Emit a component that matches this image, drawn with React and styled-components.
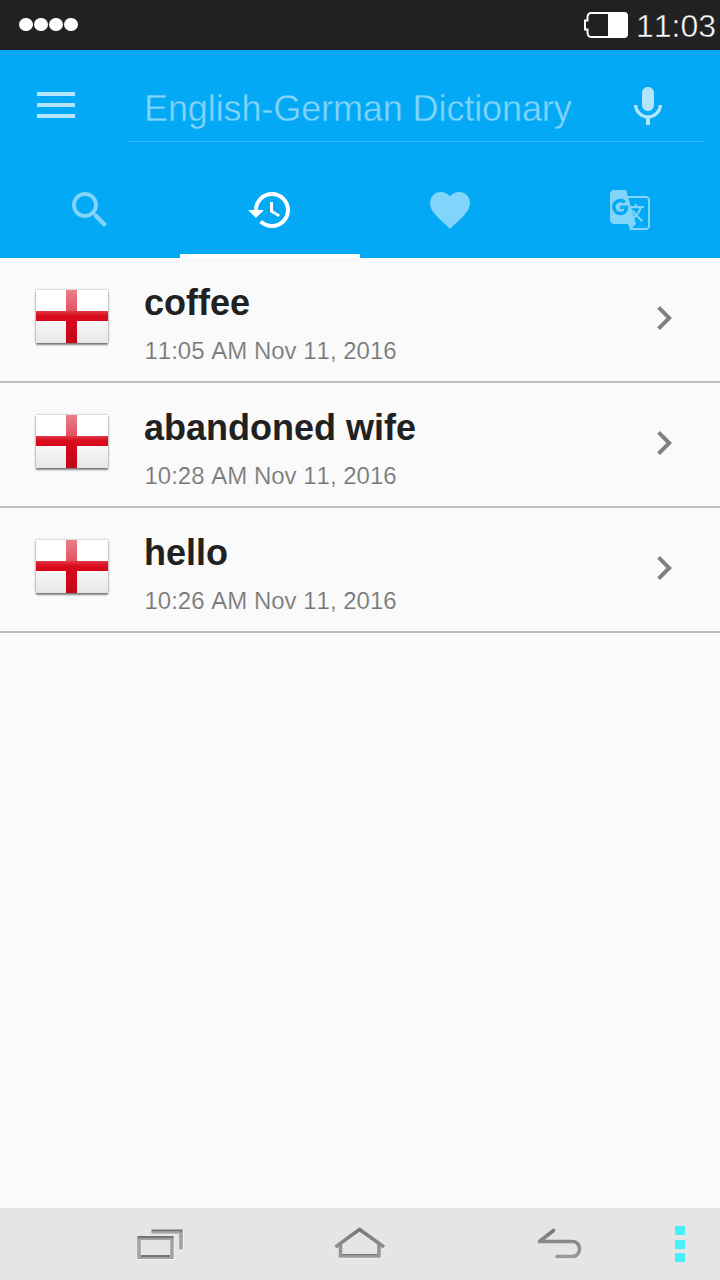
import React, { useState } from 'react';
import styled, { createGlobalStyle } from 'styled-components';

const GlobalStyle = createGlobalStyle`
  * {
    box-sizing: border-box;
  }

  body {
    margin: 0;
    background: #fafafa;
    font-family: 'Liberation Sans', Arial, sans-serif;
    font-kerning: none;
  }
`;

const Screen = styled.div`
  display: flex;
  flex-direction: column;
  width: 720px;
  height: 1280px;
  background: #fafafa;
  overflow: hidden;
`;

// --- status bar ---
const StatusBar = styled.div`
  display: flex;
  align-items: center;
  justify-content: space-between;
  height: 50px;
  padding: 0 4px 0 19px;
  background: #212121;
`;

const Dots = styled.div`
  display: flex;
  gap: 1.5px;
  padding-bottom: 1px;
`;

const Dot = styled.span`
  width: 13.5px;
  height: 13.5px;
  border-radius: 50%;
  background: #fff;
`;

const StatusRight = styled.div`
  display: flex;
  align-items: center;
  gap: 7px;
`;

const Clock = styled.span`
  color: #fff;
  font-size: 32px;
  line-height: 50px;
  padding-top: 1px;
  -webkit-text-stroke: 0.5px #212121;
`;

// --- header ---
const Header = styled.header`
  height: 208px;
  background: #03a9f4;
`;

const Toolbar = styled.div`
  display: flex;
  height: 112px;
  padding: 0 16px 0 32px;
`;

const MenuButton = styled.button`
  display: flex;
  align-items: center;
  width: 96px;
  height: 110px;
  padding: 0 0 0 5px;
  border: none;
  background: none;
`;

const SearchField = styled.div`
  display: flex;
  flex: 1;
  justify-content: space-between;
  height: 92px;
  padding: 33px 32px 0 16px;
  border-bottom: 1px solid #35bbf7;
`;

const SearchInput = styled.input`
  width: 450px;
  height: 52px;
  padding: 0;
  border: none;
  outline: none;
  background: none;
  font-family: inherit;
  font-size: 36px;
  letter-spacing: -0.1px;

  &::placeholder {
    color: #81d4fa;
    opacity: 1;
    -webkit-text-stroke: 0.4px #03a9f4;
  }
`;

const Tabs = styled.nav`
  display: grid;
  grid-template-columns: repeat(4, 1fr);
  height: 96px;
`;

const Tab = styled.button`
  display: flex;
  align-items: center;
  justify-content: center;
  padding: 4px 0 0;
  border: none;
  border-bottom: 4px solid ${({ $active }) => ($active ? '#fff' : 'transparent')};
  background: none;
  color: ${({ $active }) => ($active ? '#fff' : '#81d4fa')};
`;

// --- history list ---
const List = styled.main`
  flex: 1;
`;

const Row = styled.div`
  display: flex;
  height: 125px;
  padding: 0 32px 0 36px;
  border-bottom: 2px solid #bdbdbd;
`;

const RowText = styled.div`
  flex: 1;
  padding: 24px 0 0 36px;
`;

const Word = styled.div`
  height: 42px;
  color: #212121;
  font-size: 36px;
  font-weight: bold;
  line-height: 42px;
`;

const Time = styled.div`
  margin: 12px 0 0 0.5px;
  color: #757575;
  font-size: 24px;
  line-height: 30px;
  -webkit-text-stroke: 0.2px #fafafa;
`;

const Flag = styled.div`
  display: grid;
  grid-template-columns: 30px 11px 31px;
  grid-template-rows: 21px 10px 22px;
  width: 72px;
  height: 53px;
  margin-top: 32px;
  border-radius: 1px;
  background: linear-gradient(#fff 40%, #f8f8f8 60%, #e6e6e6);
  box-shadow: 0 0 2px rgba(0, 0, 0, 0.45), 0 2px 2px rgba(0, 0, 0, 0.45);
`;

const CrossV = styled.span`
  grid-column: 2;
  grid-row: 1 / 4;
  background: linear-gradient(#ea7f8b, #e2525f 40%, #d80a1c 50%, #c40618);
`;

const CrossH = styled.span`
  grid-column: 1 / 4;
  grid-row: 2;
  background: linear-gradient(#e03a47, #d90a1b 50%, #d60819);
`;

const Chevron = styled.svg`
  margin-top: 36px;
`;

// --- bottom navigation ---
const NavBar = styled.footer`
  display: grid;
  grid-template-columns: 60px 200px 200px 200px 40px 20px;
  align-items: center;
  justify-items: center;
  height: 72px;
  background: #e5e5e5;
`;

const NavButton = styled.button`
  display: flex;
  grid-column: ${({ $column }) => $column};
  padding: 0 0 2px;
  border: none;
  background: none;
`;

const More = styled.div`
  display: flex;
  flex-direction: column;
  grid-column: 5;
  gap: 4.5px;
`;

const MoreDot = styled.span`
  width: 10px;
  height: 9px;
  background: #48eff8;
`;

const icons = {
  search:
    'M15.5 14h-.79l-.28-.27C15.41 12.59 16 11.11 16 9.5 16 5.91 13.09 3 9.5 3S3 5.91 3 9.5 5.91 16 9.5 16c1.61 0 3.09-.59 4.23-1.57l.27.28v.79l5 4.99L20.49 19l-4.99-5zm-6 0C7.01 14 5 11.99 5 9.5S7.01 5 9.5 5 14 7.01 14 9.5 11.99 14 9.5 14z',
  history:
    'M13 3c-4.97 0-9 4.03-9 9H1l3.89 3.89.07.14L9 12H6c0-3.87 3.13-7 7-7s7 3.13 7 7-3.13 7-7 7c-1.93 0-3.68-.79-4.94-2.06l-1.42 1.42C8.27 19.99 10.51 21 13 21c4.97 0 9-4.03 9-9s-4.03-9-9-9zm-1 5v5l4.28 2.54.72-1.21-3.5-2.08V8H12z',
  favorite:
    'M12 21.35l-1.45-1.32C5.4 15.36 2 12.28 2 8.5 2 5.42 4.42 3 7.5 3c1.74 0 3.41.81 4.5 2.09C13.09 3.81 14.76 3 16.5 3 19.58 3 22 5.42 22 8.5c0 3.78-3.4 6.86-8.55 11.54L12 21.35z',
  translate:
    'M20 5h-9.12L10 2H4c-1.1 0-2 .9-2 2v13c0 1.1.9 2 2 2h7l1 3h8c1.1 0 2-.9 2-2V7c0-1.1-.9-2-2-2zM7.17 14.59c-2.25 0-4.09-1.83-4.09-4.09s1.83-4.09 4.09-4.09c1.04 0 1.99.37 2.74 1.07l.07.06-1.23 1.18-.06-.05c-.29-.27-.78-.59-1.52-.59-1.31 0-2.38 1.09-2.38 2.42s1.07 2.42 2.38 2.42c1.37 0 1.96-.87 2.12-1.46H7.08V9.91h3.95l.01.07c.04.21.05.4.05.61 0 2.35-1.61 4-3.92 4zm6.03-1.71c.33.6.74 1.18 1.19 1.7l-.54.53-.65-2.23zm.77-.76h-.99l-.31-1.04h3.99s-.34 1.31-1.56 2.74c-.52-.62-.89-1.23-1.13-1.7zM21 20c0 .55-.45 1-1 1h-7l2-2-.81-2.77.92-.92L17.79 18l.73-.73-2.71-2.68c.9-1.03 1.6-2.25 1.92-3.51H19v-1.04h-3.64V9h-1.04v1.04h-1.96L11.18 6H20c.55 0 1 .45 1 1v13z',
  mic:
    'M12 14c1.66 0 2.99-1.34 2.99-3L15 5c0-1.66-1.34-3-3-3S9 3.34 9 5v6c0 1.66 1.34 3 3 3zm5.3-3c0 3-2.54 5.1-5.3 5.1S6.7 14 6.7 11H5c0 3.41 2.72 6.23 6 6.72V21h2v-3.28c3.28-.48 6-3.3 6-6.72h-1.7z',
};

const Icon = ({ name }) => (
  <svg width="48" height="48" viewBox="0 0 24 24" fill="currentColor">
    <path d={icons[name]} />
  </svg>
);

const MicButton = styled.button`
  display: flex;
  width: 48px;
  height: 48px;
  padding: 0;
  border: none;
  background: none;
  color: #b3e5fc;
`;

const Battery = () => (
  <svg width="46" height="28" viewBox="0 0 46 28">
    <path
      d="M8 2H40Q44 2 44 6V22Q44 26 40 26H8Q5 26 4.500 22V18.500H2V9.500H4.500V6Q5 2 8 2Z"
      fill="none"
      stroke="#fff"
      strokeWidth="2"
    />
    <path d="M25 1H41Q45 1 45 5V23Q45 27 41 27H25Z" fill="#fff" />
  </svg>
);

const NavGradient = ({ id }) => (
  <linearGradient id={id} x1="0" y1="0" x2="0" y2="36" gradientUnits="userSpaceOnUse">
    <stop offset="0" stopColor="#737373" />
    <stop offset="1" stopColor="#a0a0a0" />
  </linearGradient>
);

// recent apps
const RecentIcon = () => (
  <svg width="50" height="36" viewBox="0 0 50 36" fill="none">
    <path d="M2 34.500H39.500V12M48.500 5V25.500H44" stroke="#f0f0f0" />
    <path d="M4 12V32M37 12V32M46 6V24.500" stroke="#a2a2a2" strokeWidth="3.500" />
    <path d="M2.500 14H38.500M16.500 7.500H47.500M2.500 33H38.500" stroke="#a2a2a2" strokeWidth="2" />
    <path d="M2.500 12H38.500M16.500 5.500H47.500M6 31H35" stroke="#747474" strokeWidth="2" />
  </svg>
);

const HomeIcon = () => (
  <svg width="54" height="36" viewBox="0 0 54 36" fill="none">
    <NavGradient id="home" />
    <path d="M2 24.500L27 7.500L52 24.500M6 33.500H48" stroke="#f0f0f0" />
    <path d="M7.500 19V31H46V19" stroke="url(#home)" strokeWidth="3.500" />
    <path d="M9.500 29.500H44.500" stroke="#777" strokeWidth="1" />
    <path d="M2.500 22L26.500 4.500L51 22" stroke="url(#home)" strokeWidth="3.500" />
  </svg>
);

const BackIcon = () => (
  <svg width="50" height="36" viewBox="0 0 50 36" fill="none" strokeLinecap="round" strokeLinejoin="round">
    <NavGradient id="back" />
    <path d="M21 34H38Q47 33 47.500 25" stroke="#f0f0f0" />
    <path
      d="M18.500 5.500L4.500 16.500H37C47 16.500 47 31.500 37 31.500H22"
      stroke="url(#back)"
      strokeWidth="3.700"
    />
  </svg>
);

const tabs = ['search', 'history', 'favorite', 'translate'];

const entries = [
  { word: 'coffee', time: '11:05 AM Nov 11, 2016' },
  { word: 'abandoned wife', time: '10:28 AM Nov 11, 2016' },
  { word: 'hello', time: '10:26 AM Nov 11, 2016' },
];

const App = () => {
  const [activeTab, setActiveTab] = useState('history');
  const [query, setQuery] = useState('');

  return (
    <Screen>
      <GlobalStyle />
      <StatusBar>
        <Dots>
          <Dot />
          <Dot />
          <Dot />
          <Dot />
        </Dots>
        <StatusRight>
          <Battery />
          <Clock>11:03</Clock>
        </StatusRight>
      </StatusBar>

      <Header>
        <Toolbar>
          <MenuButton aria-label="Menu">
            <svg width="38" height="26" viewBox="0 0 38 26" fill="#b3e5fc">
              <path d="M0 0h38v4H0zM0 11h38v4H0zM0 22h38v4H0z" />
            </svg>
          </MenuButton>
          <SearchField>
            <SearchInput
              placeholder="English-German Dictionary"
              value={query}
              onChange={(e) => setQuery(e.target.value)}
            />
            <MicButton aria-label="Voice search">
              <Icon name="mic" />
            </MicButton>
          </SearchField>
        </Toolbar>
        <Tabs>
          {tabs.map((tab) => (
            <Tab
              key={tab}
              aria-label={tab}
              $active={tab === activeTab}
              onClick={() => setActiveTab(tab)}
            >
              <Icon name={tab} />
            </Tab>
          ))}
        </Tabs>
      </Header>

      <List>
        {entries.map(({ word, time }) => (
          <Row key={word}>
            <Flag>
              <CrossV />
              <CrossH />
            </Flag>
            <RowText>
              <Word>{word}</Word>
              <Time>{time}</Time>
            </RowText>
            <Chevron width="48" height="48" viewBox="0 0 24 24" fill="#808080">
              <path d="M10 6L8.590 7.410 13.170 12l-4.580 4.590L10 18l6-6z" />
            </Chevron>
          </Row>
        ))}
      </List>

      <NavBar>
        <NavButton $column={2} aria-label="Recent apps">
          <RecentIcon />
        </NavButton>
        <NavButton $column={3} aria-label="Home">
          <HomeIcon />
        </NavButton>
        <NavButton $column={4} aria-label="Back">
          <BackIcon />
        </NavButton>
        <More>
          <MoreDot />
          <MoreDot />
          <MoreDot />
        </More>
      </NavBar>
    </Screen>
  );
};

export default App;
